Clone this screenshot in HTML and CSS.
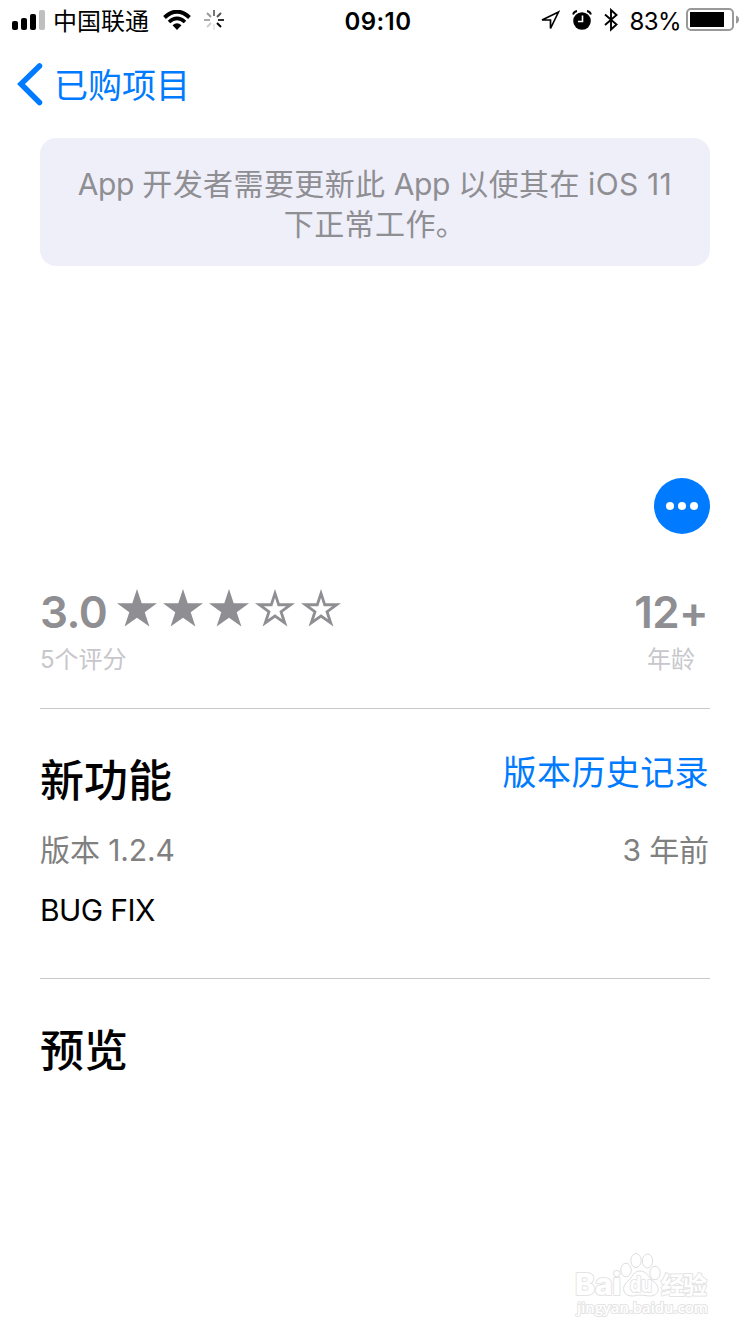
FILE: index.html
```html
<!DOCTYPE html>
<html lang="zh-CN">
<head>
  <meta charset="utf-8">
  <title>已购项目</title>
  <link rel="stylesheet" href="styles.css">
</head>
<body>
  <header class="status-bar">
    <div class="status-left">
      <svg class="signal" width="34" height="20" viewBox="0 0 34 20">
        <rect x="0" y="11" width="6" height="9" rx="2"/>
        <rect x="9" y="8" width="6" height="12" rx="2"/>
        <rect x="18" y="4" width="6" height="16" rx="2"/>
        <rect x="27" y="0" width="6" height="20" rx="2" fill="#bfbfbf"/>
      </svg>
      <span class="carrier">中国联通</span>
      <svg class="wifi" width="28" height="20" viewBox="0 0 28 20">
        <path d="M1.5 7.5Q14-4 26.500 7.500" fill="none" stroke="#000" stroke-width="4"/>
        <path d="M6 12Q14 4.800 22 12" fill="none" stroke="#000" stroke-width="3.600"/>
        <path d="M9.500 15.300Q14 11.200 18.500 15.300L14 20Z"/>
      </svg>
      <svg class="spinner" width="20" height="20" viewBox="0 0 20 20" stroke-width="2">
        <path d="M10 0V6" stroke="#777"/>
        <path d="M17 3L13 7" stroke="#555"/>
        <path d="M20 10H14" stroke="#333"/>
        <path d="M17 17L13 13" stroke="#000"/>
        <path d="M10 20V14" stroke="#e8e8e8"/>
        <path d="M3 17L7 13" stroke="#ccc"/>
        <path d="M0 10H6" stroke="#aaa"/>
        <path d="M3 3L7 7" stroke="#999"/>
      </svg>
    </div>
    <div class="time">09:10</div>
    <div class="status-right">
      <svg class="location" width="20" height="20" viewBox="0 0 20 20">
        <path d="M18.500 2L2 10H10.500V18.500Z" fill="none" stroke="#000" stroke-width="1.700"/>
      </svg>
      <svg class="alarm" width="20" height="20" viewBox="0 0 20 20">
        <circle cx="10" cy="11" r="8.800"/>
        <path d="M10.500 5.500V11.500H6" fill="none" stroke="#fff" stroke-width="1.600"/>
        <path d="M1 4.500Q2 1.500 5 1M19 4.500Q18 1.500 15 1" fill="none" stroke="#000" stroke-width="1.800"/>
      </svg>
      <svg class="bluetooth" width="14" height="24" viewBox="0 0 14 24">
        <path d="M1 6.500L12.500 16.500L7 21.500V2L12.500 7L1 17" fill="none" stroke="#000" stroke-width="1.900"/>
      </svg>
      <span class="percent">83%</span>
      <svg class="battery" width="54" height="24" viewBox="0 0 54 24">
        <rect x="1" y="1" width="46" height="21" rx="4" fill="none" stroke="#999" stroke-width="2"/>
        <rect x="4" y="4" width="34" height="15"/>
        <path d="M50 7.500Q53 8.500 53 11.500T50 15.500Z" fill="#999"/>
      </svg>
    </div>
  </header>

  <nav class="nav-bar">
    <svg class="chevron" width="28" height="44" viewBox="0 0 28 44">
      <path d="M24.500 4L6 22L24.500 40.500" fill="none" stroke="#007aff" stroke-width="5.500" stroke-linecap="round"/>
    </svg>
    <span class="back-title">已购项目</span>
  </nav>

  <main>
    <div class="notice"><span class="app">App</span> 开发者需要更新此 <span class="app">App</span> 以使其在 iOS 11<br>下正常工作。</div>

    <div class="actions">
      <svg class="more" width="56" height="56" viewBox="0 0 56 56">
        <circle cx="28" cy="28" r="28" fill="#007aff"/>
        <circle cx="16" cy="28" r="4" fill="#fff"/>
        <circle cx="28" cy="28" r="4" fill="#fff"/>
        <circle cx="40" cy="28" r="4" fill="#fff"/>
      </svg>
    </div>

    <section class="summary">
      <div class="rating">
        <div class="score-row">
          <span class="score">3.0</span>
          <svg class="stars" width="226" height="40" viewBox="0 0 226 40">
            <defs>
              <path id="star" d="M20 0L24.700 14.300H40L27.700 23.200L32.400 37.500L20 28.700L7.600 37.500L12.300 23.200L0 14.300H15.300Z"/>
              <path id="star-hole" d="M20 8.800L22.700 17.200H31.200L24.400 22.200L27 30.300L20 25.200L13 30.300L15.600 22.200L8.800 17.200H17.300Z"/>
            </defs>
            <use href="#star"/>
            <use href="#star" x="46"/>
            <use href="#star" x="92"/>
            <use href="#star" x="138"/>
            <use href="#star-hole" x="138" fill="#fff"/>
            <use href="#star" x="184"/>
            <use href="#star-hole" x="184" fill="#fff"/>
          </svg>
        </div>
        <div class="caption">5个评分</div>
      </div>
      <div class="age">
        <div class="score">12+</div>
        <div class="caption">年龄</div>
      </div>
    </section>

    <section class="whats-new">
      <div class="section-head">
        <h2>新功能</h2>
        <span class="history">版本历史记录</span>
      </div>
      <div class="version-row">
        <span>版本 1.2.4</span>
        <span>3 年前</span>
      </div>
      <p class="notes">BUG FIX</p>
    </section>

    <section class="preview">
      <h2>预览</h2>
    </section>
  </main>

  <!-- site watermark -->
  <div class="watermark">
    <svg width="140" height="70" viewBox="0 0 140 70">
      <g fill="#fff" stroke="#dedede">
        <path d="M66 18C59 18 59 24 53 29C47 34 49 43 58 43C62 43 62 42 66 42C70 42 72 43 76 43C85 43 87 34 80 29C74 24 73 18 66 18Z"/>
        <ellipse cx="52" cy="17" rx="5.200" ry="6.800"/>
        <ellipse cx="62" cy="7.500" rx="5.200" ry="7"/>
        <ellipse cx="73.500" cy="8" rx="5.200" ry="7"/>
        <ellipse cx="81" cy="20" rx="5.200" ry="6.800"/>
      </g>
      <text class="wm-latin" x="1" y="42" textLength="46" lengthAdjust="spacingAndGlyphs">Bai</text>
      <text class="wm-du" x="56" y="39" textLength="22" lengthAdjust="spacingAndGlyphs">du</text>
      <text class="wm-cjk" x="87" y="41" textLength="46">经验</text>
      <text class="wm-url" x="3" y="60" textLength="131" lengthAdjust="spacingAndGlyphs">jingyan.baidu.com</text>
    </svg>
  </div>
</body>
</html>
```
FILE: styles.css
```css
* {
  box-sizing: border-box;
}

body {
  margin: 0;
  height: 1334px;
  position: relative;
  overflow: hidden;
  background: #fff;
  color: #000;
  font-family: Inter, "Noto Sans CJK SC", sans-serif;
  font-weight: 400;
}

svg {
  display: block;
  flex: none;
}

/* status bar */
.status-bar {
  display: grid;
  grid-template-columns: 1fr auto 1fr;
  align-items: center;
  height: 40px;
  padding: 0 12px;
  font-size: 24px;
  line-height: 40px;
}

.status-left,
.status-right {
  display: flex;
  align-items: center;
}

.carrier {
  margin-left: 7px;
  padding-top: 3px;
  line-height: 37px;
}

.wifi {
  margin-left: 14px;
}

.spinner {
  margin-left: 13px;
}

.time {
  padding: 3px 0 0 6px;
  font-weight: 600;
  line-height: 37px;
  letter-spacing: 0.4px;
}

.status-right {
  justify-content: flex-end;
  margin-right: -2px;
}

.alarm {
  margin-left: 12px;
}

.bluetooth {
  margin-left: 12px;
}

.percent {
  margin: 0 5px 0 12px;
  padding-top: 3px;
  line-height: 37px;
  letter-spacing: -0.6px;
}

/* navigation */
.nav-bar {
  display: flex;
  align-items: center;
  height: 88px;
  padding-left: 15px;
  color: #007aff;
  font-size: 34px;
}

.back-title {
  margin-left: 11px;
  padding-bottom: 2px;
}

main {
  padding: 10px 40px 0;
}

.notice {
  height: 128px;
  padding-top: 26px;
  border-radius: 16px;
  background: #efeff9;
  color: #8e8e93;
  font-size: 30px;
  line-height: 40px;
  letter-spacing: 0.4px;
  word-spacing: -0.6px;
  text-align: center;
}

.app {
  letter-spacing: -0.4px;
}

.actions {
  display: flex;
  justify-content: flex-end;
  margin-top: 212px;
}

/* rating and age */
.summary {
  display: flex;
  justify-content: space-between;
  height: 175px;
  padding-top: 52px;
  border-bottom: 1px solid #c8c7cc;
  color: #8e8e93;
}

.score-row {
  display: flex;
}

.score {
  font-size: 44px;
  font-weight: 600;
  line-height: 53px;
  letter-spacing: -0.6px;
}

.stars {
  margin: 3px 0 0 10px;
  fill: #8e8e93;
}

.caption {
  padding-top: 1px;
  color: #c7c7cc;
  font-size: 24px;
  line-height: 40px;
}

.age {
  padding-right: 2px;
  text-align: center;
}

/* release notes */
h2 {
  margin: 0;
  font-size: 44px;
  font-weight: 500;
  line-height: 54px;
}

.whats-new {
  height: 270px;
  padding-top: 45px;
  border-bottom: 1px solid #c8c7cc;
}

.section-head,
.version-row {
  display: flex;
  justify-content: space-between;
}

.history {
  margin: -1px 1px 0 0;
  color: #007aff;
  font-size: 34px;
  line-height: 40px;
  letter-spacing: 0.4px;
}

.version-row {
  margin-top: 22px;
  padding-right: 1px;
  color: #808080;
  font-size: 30px;
  line-height: 40px;
  letter-spacing: -0.1px;
}

.notes {
  margin: 20px 0 0;
  font-size: 30px;
  line-height: 40px;
  letter-spacing: -0.6px;
}

.preview {
  padding-top: 45px;
}

.watermark {
  position: absolute;
  left: 574px;
  top: 1253px;
}

.watermark text {
  fill: #fff;
  stroke: #e4e4e4;
  stroke-width: 2px;
  stroke-linejoin: round;
  paint-order: stroke;
}

.wm-latin {
  font: 800 30px Inter, sans-serif;
}

.wm-du {
  font: bold 21px Inter, sans-serif;
}

.wm-cjk {
  font: bold 24px "Noto Sans CJK SC", sans-serif;
}

.wm-url {
  font: 600 15px "Open Sans", sans-serif;
}
```
